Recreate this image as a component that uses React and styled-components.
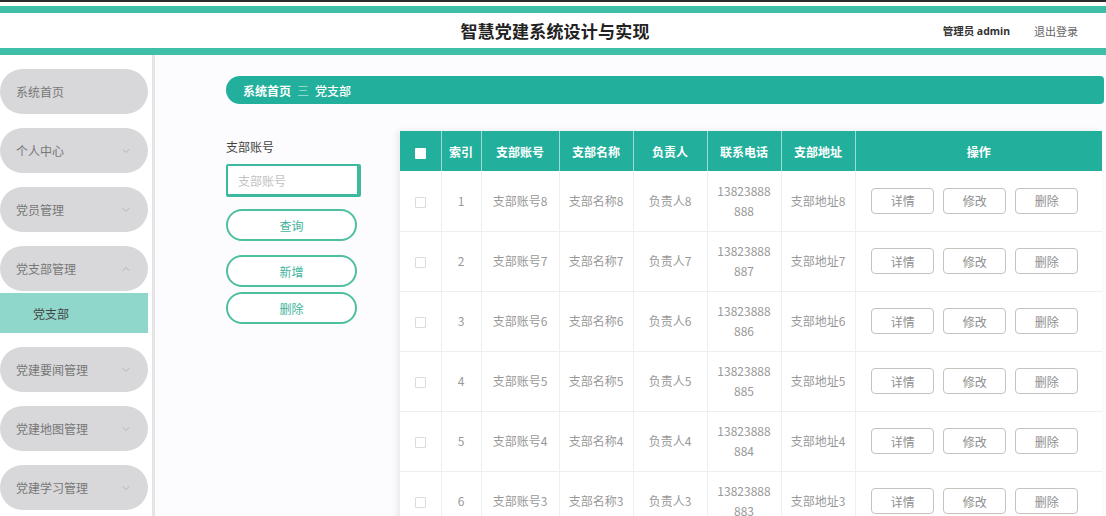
import React from "react";
import styled, { createGlobalStyle } from "styled-components";
import { ChevronDown, ChevronUp } from "lucide-react";

const GlobalStyle = createGlobalStyle`
  html, body { margin: 0; padding: 0; }
  body {
    font-family: "Noto Sans", "Noto Sans CJK SC", sans-serif;
    background: #fcfcfe;
    overflow: hidden;
    width: 1106px;
    height: 516px;
  }
  * { box-sizing: border-box; }
`;

const Page = styled.div`
  width: 1106px;
  height: 516px;
  display: flex;
  flex-direction: column;
  overflow: hidden;
`;

const TopFrame = styled.div`
  border-top: 2px solid #2b2b2b;
  padding-top: 4px;
  background: #fff;
  flex-shrink: 0;
`;

const Band = styled.div`
  height: 7px;
  background: #3fbea8;
`;

const Header = styled.header`
  height: 35px;
  background: #fff;
  position: relative;
  display: flex;
  align-items: center;
  justify-content: center;
  padding-left: 4px;
`;

const Title = styled.h1`
  margin: 0;
  font-family: "Noto Sans CJK SC", sans-serif;
  font-size: 17px;
  font-weight: 700;
  color: #222;
  letter-spacing: 0.2px;
`;

const UserBox = styled.div`
  position: absolute;
  right: 28px;
  top: 0;
  height: 100%;
  display: flex;
  align-items: center;
  gap: 24px;
  font-size: 11px;
`;

const UserName = styled.span`
  font-weight: 700;
  font-size: 10.5px;
  color: #333;
`;

const Logout = styled.span`
  color: #666;
`;

const Body = styled.div`
  flex: 1;
  display: flex;
  min-height: 0;
`;

const Sidebar = styled.nav`
  width: 155px;
  flex-shrink: 0;
  background: #fff;
  border-right: 3px solid #e4e4e6;
  padding-top: 14px;
  display: flex;
  flex-direction: column;
`;

const MenuPill = styled.div`
  width: 148px;
  height: 45px;
  border-radius: 23px;
  background: #d8d8da;
  display: flex;
  align-items: center;
  justify-content: space-between;
  padding: 0 16px;
  margin-bottom: ${(p) => (p.$open ? "2px" : "14px")};
  font-family: "Noto Sans CJK SC", sans-serif;
  font-size: 12px;
  color: #777;
  flex-shrink: 0;
  svg { color: #a8a8a8; }
`;

const SubItem = styled.div`
  width: 148px;
  height: 40px;
  background: #8fd6cb;
  display: flex;
  align-items: center;
  padding-left: 33px;
  margin-bottom: 14px;
  font-family: "Noto Sans CJK SC", sans-serif;
  font-size: 12px;
  color: #444;
  flex-shrink: 0;
`;

const Main = styled.main`
  flex: 1;
  padding: 21px 2px 0 71px;
  display: flex;
  flex-direction: column;
  min-width: 0;
`;

const Breadcrumb = styled.div`
  height: 28px;
  flex-shrink: 0;
  border-radius: 14px 4px 4px 14px;
  background: #22b09d;
  display: flex;
  align-items: center;
  gap: 6px;
  padding-left: 17px;
  font-family: "Noto Sans CJK SC", sans-serif;
  font-size: 12px;
  color: #fff;
`;

const Crumb = styled.span`
  font-weight: ${(p) => (p.$strong ? 700 : 500)};
`;

const Sep = styled.span`
  font-weight: 300;
  opacity: 0.85;
`;

const Content = styled.div`
  margin-top: 27px;
  display: flex;
  gap: 39px;
  align-items: flex-start;
`;

const SearchCol = styled.div`
  width: 135px;
  padding-top: 9px;
  display: flex;
  flex-direction: column;
`;

const Label = styled.div`
  font-family: "Noto Sans CJK SC", sans-serif;
  font-size: 12px;
  color: #444;
  line-height: 14px;
  margin-bottom: 10px;
`;

const Input = styled.input`
  width: 135px;
  height: 33px;
  border: 2px solid #3cb99f;
  border-right-width: 4px;
  border-bottom-width: 3px;
  border-radius: 2px;
  padding: 0 10px;
  font-family: "Noto Sans CJK SC", sans-serif;
  font-size: 12px;
  color: #333;
  background: #fff;
  outline: none;
  &::placeholder { color: #c2c2c2; }
`;

const PillButton = styled.button`
  width: 131px;
  height: 32px;
  border-radius: 16px;
  border: 2px solid #4fbf9f;
  background: #fff;
  color: #3fb39b;
  font-family: "Noto Sans CJK SC", sans-serif;
  font-size: 12px;
  margin-top: ${(p) => p.$gap}px;
  cursor: pointer;
`;

const TableWrap = styled.div`
  width: 702px;
  background: #fff;
  box-shadow: -3px 0 6px rgba(0, 0, 0, 0.08);
`;

const Table = styled.table`
  width: 702px;
  table-layout: fixed;
  border-collapse: collapse;
  font-family: "Noto Sans CJK SC", sans-serif;
  font-size: 12px;
`;

const Th = styled.th`
  height: 40px;
  background: #22b09d;
  color: #fff;
  font-weight: 700;
  border-left: 1px solid rgba(255, 255, 255, 0.55);
  padding: 0;
  text-align: center;
  &:first-child { border-left: none; }
`;

const Td = styled.td`
  height: 60px;
  color: #999;
  text-align: center;
  line-height: 20px;
  border-left: 1px solid #efefef;
  border-bottom: 1px solid #efefef;
  padding: 0;
  &:first-child { border-left: none; }
`;

const HeadBox = styled.span`
  display: inline-block;
  width: 11px;
  height: 11px;
  background: #fff;
  border-radius: 1px;
  vertical-align: middle;
`;

const RowBox = styled.span`
  display: inline-block;
  width: 11px;
  height: 11px;
  background: #fff;
  border: 1px solid #dcdcdc;
  border-radius: 1px;
  vertical-align: middle;
`;

const Ops = styled.div`
  display: flex;
  justify-content: center;
  gap: 9px;
  padding-right: 8px;
`;

const OpButton = styled.button`
  width: 63px;
  height: 26px;
  border: 1px solid #c4c4be;
  border-radius: 4px;
  background: #fff;
  color: #8f8f8f;
  font-family: "Noto Sans CJK SC", sans-serif;
  font-size: 12px;
  padding: 0;
`;

const menus = [
  { name: "系统首页", chevron: false },
  { name: "个人中心", chevron: true },
  { name: "党员管理", chevron: true },
  { name: "党支部管理", chevron: true, open: true, sub: "党支部" },
  { name: "党建要闻管理", chevron: true },
  { name: "党建地图管理", chevron: true },
  { name: "党建学习管理", chevron: true },
];

const rows = [8, 7, 6, 5, 4, 3].map((n, i) => ({
  idx: i + 1,
  n,
  tail: `88${n}`,
}));

const cols = [41, 40, 78, 74, 74, 74, 74, 247];

export default function App() {
  return (
    <Page>
      <GlobalStyle />
      <TopFrame>
        <Band />
        <Header>
          <Title>智慧党建系统设计与实现</Title>
          <UserBox>
            <UserName>管理员 admin</UserName>
            <Logout>退出登录</Logout>
          </UserBox>
        </Header>
        <Band />
      </TopFrame>
      <Body>
        <Sidebar>
          {menus.map((m) => (
            <React.Fragment key={m.name}>
              <MenuPill $open={m.open}>
                <span>{m.name}</span>
                {m.chevron &&
                  (m.open ? (
                    <ChevronUp size={12} strokeWidth={1.5} />
                  ) : (
                    <ChevronDown size={12} strokeWidth={1.5} />
                  ))}
              </MenuPill>
              {m.sub && <SubItem>{m.sub}</SubItem>}
            </React.Fragment>
          ))}
        </Sidebar>
        <Main>
          <Breadcrumb>
            <Crumb $strong>系统首页</Crumb>
            <Sep>三</Sep>
            <Crumb>党支部</Crumb>
          </Breadcrumb>
          <Content>
            <SearchCol>
              <Label>支部账号</Label>
              <Input placeholder="支部账号" />
              <PillButton $gap={12}>查询</PillButton>
              <PillButton $gap={14}>新增</PillButton>
              <PillButton $gap={5}>删除</PillButton>
            </SearchCol>
            <TableWrap>
              <Table>
                <colgroup>
                  {cols.map((w, i) => (
                    <col key={i} style={{ width: w }} />
                  ))}
                </colgroup>
                <thead>
                  <tr>
                    <Th><HeadBox /></Th>
                    <Th>索引</Th>
                    <Th>支部账号</Th>
                    <Th>支部名称</Th>
                    <Th>负责人</Th>
                    <Th>联系电话</Th>
                    <Th>支部地址</Th>
                    <Th>操作</Th>
                  </tr>
                </thead>
                <tbody>
                  {rows.map((r) => (
                    <tr key={r.idx}>
                      <Td><RowBox /></Td>
                      <Td>{r.idx}</Td>
                      <Td>支部账号{r.n}</Td>
                      <Td>支部名称{r.n}</Td>
                      <Td>负责人{r.n}</Td>
                      <Td>
                        13823888
                        <br />
                        {r.tail}
                      </Td>
                      <Td>支部地址{r.n}</Td>
                      <Td>
                        <Ops>
                          <OpButton>详情</OpButton>
                          <OpButton>修改</OpButton>
                          <OpButton>删除</OpButton>
                        </Ops>
                      </Td>
                    </tr>
                  ))}
                </tbody>
              </Table>
            </TableWrap>
          </Content>
        </Main>
      </Body>
    </Page>
  );
}
